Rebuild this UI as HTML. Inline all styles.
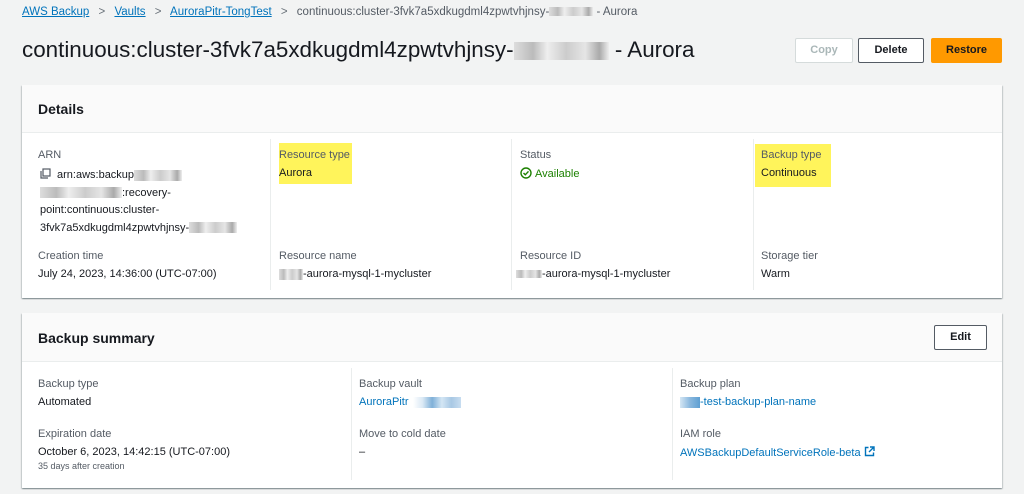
<!DOCTYPE html>
<html><head><meta charset="utf-8"><style>
*{margin:0;padding:0;box-sizing:border-box}
body{width:1024px;height:494px;background:#f2f3f3;font-family:"Liberation Sans",Arial,sans-serif;color:#16191f;position:relative;overflow:hidden;font-size:11px}
.a{position:absolute;white-space:nowrap}
.lnk{color:#0073bb}
.bc{top:6px;font-size:11.5px}
.bc u{color:#0073bb}
.card{position:absolute;left:22px;width:980px;background:#fff;box-shadow:0 1px 1px rgba(0,28,36,.3),1px 1px 1px rgba(0,28,36,.15),-1px 1px 1px rgba(0,28,36,.15)}
.hd{position:absolute;left:0;top:0;width:100%;background:#fafafa;border-bottom:1px solid #eaeded}
.hd b{position:absolute;left:16px;font-size:14px}
.lab{color:#545b64;font-size:11px}
.val{font-size:11px}
.div{position:absolute;width:1px;background:#eaeded}
.blur{display:inline-block;height:11px;vertical-align:middle;background:linear-gradient(90deg,#ddd,#bbb 20%,#eee 35%,#ccc 55%,#e5e5e5 75%,#aaa 90%,#eee)}
.btn{position:absolute;height:25px;border:1px solid #545b64;border-radius:2px;background:#fff;font-weight:bold;font-size:11px;text-align:center;line-height:23px}
.hl{position:absolute;background:#fff45b}
</style></head><body>
<div class="a bc" style="left:22px"><u>AWS Backup</u> <span style="color:#687078;margin:0 6px">&gt;</span> <u>Vaults</u> <span style="color:#687078;margin:0 6px">&gt;</span> <u>AuroraPitr-TongTest</u> <span style="color:#687078;margin:0 6px">&gt;</span> <span style="color:#545b64">continuous:cluster-3fvk7a5xdkugdml4zpwtvhjnsy-<span class="blur" style="width:44px;height:9px"></span> - Aurora</span></div>
<div class="a" style="left:22px;top:37px;font-size:22.4px">continuous:cluster-3fvk7a5xdkugdml4zpwtvhjnsy-<span class="blur" style="width:95px;height:18px"></span> - Aurora</div>
<div class="btn" style="left:795px;top:38px;width:58px;border-color:#d5dbdb;color:#aab7b8">Copy</div>
<div class="btn" style="left:858px;top:38px;width:66px">Delete</div>
<div class="btn" style="left:931px;top:38px;width:71px;background:#ff9900;border-color:#ff9900">Restore</div>

<div class="card" style="top:85px;height:213px">
 <div class="hd" style="height:48px"><b style="top:16px">Details</b></div>
 <div class="div" style="left:248px;top:54px;height:151px"></div>
 <div class="div" style="left:489px;top:54px;height:151px"></div>
 <div class="div" style="left:731px;top:54px;height:151px"></div>
 <div class="hl" style="left:257px;top:58px;width:73px;height:41px"></div>
 <div class="hl" style="left:733px;top:59px;width:76px;height:43px"></div>
 <div class="a lab" style="left:16px;top:64px">ARN</div>
 <div class="a val" style="left:18px;top:82px;line-height:17.5px;white-space:normal;width:215px"><svg width="11" height="11" viewBox="0 0 11 11" style="vertical-align:-1px;margin-right:6px"><rect x="3" y="1" width="7" height="7" fill="none" stroke="#545b64" stroke-width="1.2"/><path d="M1 3v7h7" fill="none" stroke="#545b64" stroke-width="1.2"/></svg>arn:aws:backup<span class="blur" style="width:48px"></span><br><span class="blur" style="width:82px;margin-left:0"></span>:recovery-<br>point:continuous:cluster-<br>3fvk7a5xdkugdml4zpwtvhjnsy-<span class="blur" style="width:48px"></span></div>
 <div class="a lab" style="left:257px;top:64px">Resource type</div>
 <div class="a val" style="left:257px;top:82px">Aurora</div>
 <div class="a lab" style="left:498px;top:64px">Status</div>
 <div class="a val" style="left:498px;top:82px;color:#1d8102"><svg width="12" height="12" viewBox="0 0 12 12" style="vertical-align:-2px;margin-right:3px"><circle cx="6" cy="6" r="5" fill="none" stroke="#1d8102" stroke-width="1.4"/><path d="M3.5 6l1.8 1.8 3.2-3.4" fill="none" stroke="#1d8102" stroke-width="1.4"/></svg>Available</div>
 <div class="a lab" style="left:739px;top:64px">Backup type</div>
 <div class="a val" style="left:739px;top:82px">Continuous</div>
 <div class="a lab" style="left:16px;top:165px">Creation time</div>
 <div class="a val" style="left:16px;top:183px">July 24, 2023, 14:36:00 (UTC-07:00)</div>
 <div class="a lab" style="left:257px;top:165px">Resource name</div>
 <div class="a val" style="left:257px;top:183px"><span class="blur" style="width:24px"></span>-aurora-mysql-1-mycluster</div>
 <div class="a lab" style="left:498px;top:165px">Resource ID</div>
 <div class="a val" style="left:494px;top:183px"><span class="blur" style="width:26px;height:8px"></span>-aurora-mysql-1-mycluster</div>
 <div class="a lab" style="left:739px;top:165px">Storage tier</div>
 <div class="a val" style="left:739px;top:183px">Warm</div>
</div>

<div class="card" style="top:313px;height:175px">
 <div class="hd" style="height:49px"><b style="top:17px">Backup summary</b></div>
 <div class="btn" style="left:912px;top:12px;width:53px">Edit</div>
 <div class="div" style="left:329px;top:55px;height:112px"></div>
 <div class="div" style="left:650px;top:55px;height:112px"></div>
 <div class="a lab" style="left:16px;top:65px">Backup type</div>
 <div class="a val" style="left:16px;top:83px">Automated</div>
 <div class="a lab" style="left:16px;top:115px">Expiration date</div>
 <div class="a val" style="left:16px;top:133px">October 6, 2023, 14:42:15 (UTC-07:00)</div>
 <div class="a" style="left:16px;top:148px;font-size:9px;color:#545b64">35 days after creation</div>
 <div class="a lab" style="left:337px;top:65px">Backup vault</div>
 <div class="a val lnk" style="left:337px;top:83px">AuroraPitr<span class="blur" style="width:48px;margin-left:4px;background:linear-gradient(90deg,#fff,#dbe9f5 20%,#7fb0d8 40%,#d4e6f4 60%,#a8c8e4 80%,#c8ddf0)"></span></div>
 <div class="a lab" style="left:337px;top:115px">Move to cold date</div>
 <div class="a val" style="left:337px;top:133px">–</div>
 <div class="a lab" style="left:658px;top:65px">Backup plan</div>
 <div class="a val lnk" style="left:658px;top:83px"><span class="blur" style="width:20px;background:linear-gradient(90deg,#d4e6f4,#8ab8de,#5e9fd2)"></span>-test-backup-plan-name</div>
 <div class="a lab" style="left:658px;top:115px">IAM role</div>
 <div class="a val lnk" style="left:658px;top:133px">AWSBackupDefaultServiceRole-beta <svg width="11" height="11" viewBox="0 0 11 11" style="vertical-align:-1px"><path d="M4.5 1.5H1.5v8h8v-3M6 1h4v4M10 1L5 6" fill="none" stroke="#0073bb" stroke-width="1.4"/></svg></div>
</div>
</body></html>
